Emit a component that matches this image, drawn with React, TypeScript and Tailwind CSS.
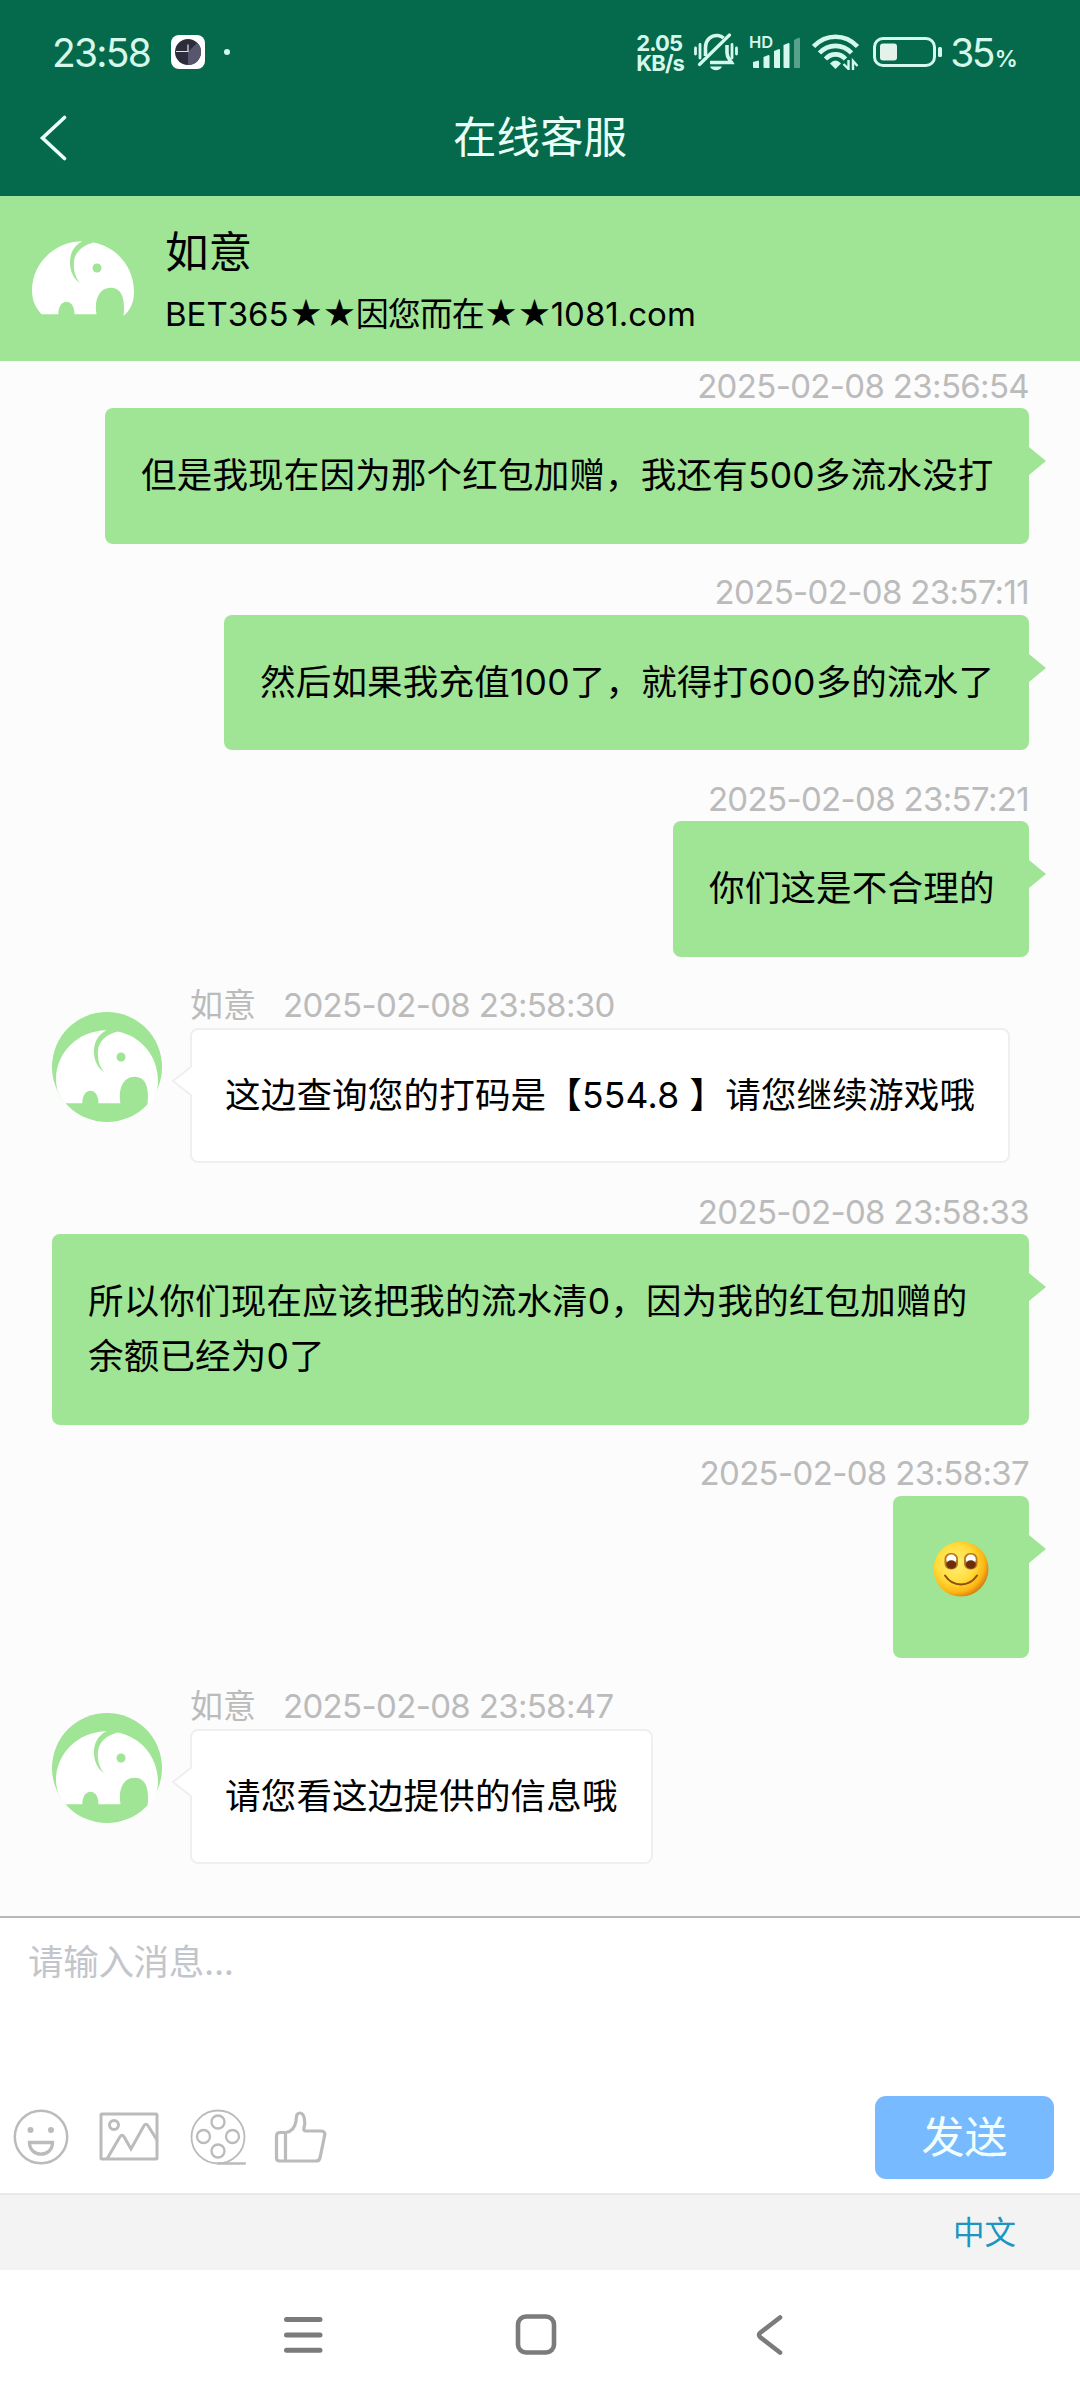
import React, { useState } from "react";

type Message = {
  id: number;
  from: "me" | "agent";
  time: string;
  text?: string;
  width: string;
};

const messages: Message[] = [
  { id: 1, from: "me", time: "2025-02-08 23:56:54", text: "但是我现在因为那个红包加赠，我还有500多流水没打", width: "w-[924px]" },
  { id: 2, from: "me", time: "2025-02-08 23:57:11", text: "然后如果我充值100了，就得打600多的流水了", width: "w-[805px]" },
  { id: 3, from: "me", time: "2025-02-08 23:57:21", text: "你们这是不合理的", width: "w-[356px]" },
  { id: 4, from: "agent", time: "2025-02-08 23:58:30", text: "这边查询您的打码是【554.8 】请您继续游戏哦", width: "w-[820px]" },
  { id: 5, from: "me", time: "2025-02-08 23:58:33", text: "所以你们现在应该把我的流水清0，因为我的红包加赠的\n余额已经为0了", width: "w-[977px]" },
  { id: 6, from: "me", time: "2025-02-08 23:58:37", width: "w-[136px]" },
  { id: 7, from: "agent", time: "2025-02-08 23:58:47", text: "请您看这边提供的信息哦", width: "w-[463px]" },
];

function Avatar() {
  return (
    <svg width="110" height="110" viewBox="0 0 110 110" className="shrink-0">
      <circle cx="55" cy="55" r="55" fill="#a0e496" />
      <path
        d="M13.5 91.3C7 84 4 77 4 67C4 42 25 18.5 54.5 18.3C45 23 41.5 32 42 41C42.4 49 46 56 52 60.3C46.5 53 45.3 46 46 38C47 29 55 22 65.5 19.5C89 24 106 44 106 69C106 79 102.5 87 95.5 93C97 80 96 64.7 82.5 64.7C71 64.7 66 77 68.5 91.3H46.5C46.5 84 43.5 78.7 38.5 78.7C33.5 78.7 30.3 84 30.3 91.3Z"
        fill="#fff"
      />
      <circle cx="69" cy="45" r="4.5" fill="#a0e496" />
    </svg>
  );
}

function SmileEmoji() {
  return (
    <svg width="56" height="56" viewBox="0 0 56 56">
      <defs>
        <radialGradient id="face" cx="0.4" cy="0.4" r="0.62">
          <stop offset="0" stopColor="#fff07a" />
          <stop offset="0.55" stopColor="#ffdd3c" />
          <stop offset="0.85" stopColor="#fdb515" />
          <stop offset="1" stopColor="#d98410" />
        </radialGradient>
      </defs>
      <circle cx="28" cy="28" r="27.5" fill="url(#face)" />
      <rect x="11.5" y="12" width="13.5" height="16.5" rx="6" fill="#b9771c" />
      <rect x="31" y="12" width="13.5" height="16.5" rx="6" fill="#b9771c" />
      <ellipse cx="18.3" cy="18.5" rx="5" ry="5" fill="#fff" />
      <ellipse cx="37.8" cy="18.5" rx="5" ry="5" fill="#fff" />
      <ellipse cx="18.3" cy="23.5" rx="5" ry="4.2" fill="#6b2f0c" />
      <ellipse cx="37.8" cy="23.5" rx="5" ry="4.2" fill="#6b2f0c" />
      <path d="M12 34.5C20 46.500 36 46.500 44 34.500" fill="none" stroke="#8a4f08" strokeWidth="2" strokeLinecap="round" />
    </svg>
  );
}

function StatusBar() {
  return (
    <div className="flex h-[104px] items-center pl-[52px] pr-[65px] text-[#d5f8ec]">
      <span className="w-[98px] whitespace-nowrap text-[39px] leading-none tracking-[-0.045em]">23:58</span>
      <svg width="34" height="34" viewBox="0 0 34 34" className="ml-[21px]">
        <rect width="34" height="34" rx="8" fill="#fff" />
        <circle cx="17" cy="17" r="13" fill="#2c2c3a" />
        <path d="M17 17L26.2 7.8A13 13 0 0 1 17 30Z" fill="#56566e" />
        <path d="M17 9.5V17M5 16.500H17" stroke="#dfe3ea" strokeWidth="1.2" />
      </svg>
      <span className="ml-[19px] h-[6px] w-[6px] rounded-full bg-[#d5f8ec]" />

      <div className="ml-auto flex items-center">
        <div className="w-[58px] whitespace-nowrap pt-[2px] text-[22px] font-bold leading-[20px] tracking-[-0.04em]">
          <div>2.05</div>
          <div>KB/s</div>
        </div>
        {/* Muted bell */}
        <svg width="44" height="38" viewBox="0 0 44 38" fill="none" stroke="currentColor">
          <path d="M1.5 15V21M6 11.5V25M42.5 15V21M38 11.5V25" strokeWidth="2.8" strokeLinecap="round" />
          <path d="M11.5 23V15C11.5 6 18 2 24 2.5C26 2.7 28 3.5 29.5 5M33 12V20C33 25 36 27 37.5 29.5H16" strokeWidth="3.6" />
          <path d="M5.5 31.5L35.5 2" strokeWidth="3.2" strokeLinecap="round" />
          <path d="M16 33.5H28C26 38.5 18 38.5 16 33.5Z" fill="currentColor" stroke="none" />
        </svg>
        <svg width="54" height="46" viewBox="-3 -6 54 46" className="ml-[9px]" fill="currentColor">
          <text x="-1" y="13" fontSize="16.5" fontWeight="600" fontFamily="Inter, sans-serif">HD</text>
          <path d="M3 27L8.5 25.5Q9 25.5 9 27V33H4Q3 33 3 32Z" />
          <path d="M13.5 22L18.5 20Q19.5 20 19.5 21V33H14.5Q13.5 33 13.5 32Z" />
          <path d="M24 16L29 14Q30 14 30 15V33H25Q24 33 24 32Z" />
          <path d="M33.5 10L38.5 8Q39.5 8 39.5 9V33H34.5Q33.5 33 33.5 32Z" />
          <path d="M44 5L49 2.5Q50 2.5 50 4V33H45Q44 33 44 32Z" opacity="0.4" />
        </svg>
        <svg width="48" height="36" viewBox="0 0 48 36" className="ml-[11px]" fill="none" stroke="currentColor">
          <path d="M1.5 12.5C14 -0.5 33 -0.5 45.5 12.5" strokeWidth="4.6" />
          <path d="M7.5 19C16.5 9.5 30.5 9.5 39.5 19" strokeWidth="4.6" />
          <path d="M13.5 25C19 18.8 28 18.8 33.5 25" strokeWidth="4.6" />
          <path d="M23.5 35L18 29.5Q23.5 23.5 29 29.5Z" fill="currentColor" stroke="none" />
          <path d="M36.5 26V35L31.5 30M41 36V27L45.5 32" strokeWidth="2.4" />
        </svg>
        <svg width="70" height="32" viewBox="0 0 70 32" className="ml-[12px]" fill="none" stroke="currentColor">
          <rect x="2.5" y="2.5" width="60" height="27" rx="8.5" strokeWidth="3" />
          <rect x="8" y="7.5" width="17" height="17" rx="3" fill="#e4f3ea" stroke="none" />
          <rect x="66" y="11" width="4" height="10" rx="1.5" fill="currentColor" stroke="none" />
        </svg>
        <span className="ml-[8px] whitespace-nowrap text-[39px] leading-none tracking-[-0.07em]">
          35<span className="ml-[2px] text-[23px] font-semibold">%</span>
        </span>
      </div>
    </div>
  );
}

function MessageRow({ message }: { message: Message }) {
  const { from, time, text, width } = message;

  if (from === "agent") {
    return (
      <div className="flex pl-[52px]">
        <div className="pt-[28px]">
          <Avatar />
        </div>
        <div className="ml-7">
          <div className="flex h-[44px] items-center gap-[27px] pt-px text-[33px] text-[#bbbbbb]">
            <span>如意</span>
            <span className="tracking-[-0.02em]">{time}</span>
          </div>
          <div className={`relative rounded-[8px] border-2 border-[#efefef] bg-white py-[38.25px] pl-[33px] ${width}`}>
            <svg width="22" height="30" viewBox="0 0 22 30" className="absolute -left-[22px] top-[36px]">
              <path d="M22 0L3 15L22 30" fill="#fff" stroke="#efefef" strokeWidth="2" />
            </svg>
            <p className="whitespace-pre text-[35.5px] leading-[55px] tracking-[0.2px]">{text}</p>
          </div>
        </div>
      </div>
    );
  }

  return (
    <div className="flex flex-col items-end pr-[51px]">
      <div className="flex h-[44px] items-center pt-px text-[33px] tracking-[-0.02em] text-[#bbbbbb]">{time}</div>
      <div className={`relative rounded-[8px] bg-[#a0e496] ${width}`}>
        <svg width="17" height="30" viewBox="0 0 17 30" className="absolute -right-[17px] top-[38px]">
          <path d="M0 1L17 15L0 29Z" fill="#a0e496" />
        </svg>
        {text ? (
          <p className="whitespace-pre py-[40.25px] pl-[36px] text-[35.5px] leading-[55px] tracking-[0.2px]">{text}</p>
        ) : (
          <div className="flex h-[162px] justify-center pt-[45px]">
            <SmileEmoji />
          </div>
        )}
      </div>
    </div>
  );
}

function Toolbar() {
  return (
    <div className="flex items-start text-[#bbbbbb]">
      <svg width="56" height="56" viewBox="0 0 56 56" fill="none" stroke="currentColor" strokeWidth="2.5">
        <circle cx="28" cy="28" r="26.2" />
        <circle cx="17.5" cy="21" r="3" fill="currentColor" stroke="none" />
        <circle cx="38" cy="21" r="3" fill="currentColor" stroke="none" />
        <path d="M16.500 33.500H39.500C39.500 49 16.500 49 16.500 33.500Z" strokeWidth="3.4" />
      </svg>
      <svg width="60" height="56" viewBox="0 0 60 56" className="ml-[30px]" fill="none" stroke="currentColor" strokeWidth="3">
        <rect x="2" y="5" width="56" height="45" rx="1" />
        <circle cx="15" cy="16" r="4.5" />
        <path d="M8 50L20.5 28.5Q23 24 25.5 28.5L32 40L44.5 17.5Q47 13 49.5 17.5L58 31" />
      </svg>
      <svg width="58" height="58" viewBox="0 0 58 58" className="ml-[30px]" fill="none" stroke="currentColor" strokeWidth="2.3">
        <circle cx="29" cy="28" r="26.5" strokeWidth="1.8" />
        <circle cx="29" cy="13" r="6.5" />
        <circle cx="29" cy="42" r="6.5" />
        <circle cx="14.5" cy="27.5" r="6.5" />
        <circle cx="43.5" cy="27.5" r="6.5" />
        <path d="M29 54.5H56" strokeLinecap="round" />
      </svg>
      <svg width="56" height="56" viewBox="0 0 56 56" className="ml-[25px]" fill="none" stroke="currentColor" strokeWidth="3.2" strokeLinejoin="round">
        <path d="M14 23.5H8Q4.5 23.5 4.5 27V49Q4.5 52 7.5 52H44C46 52 47.5 51 48 49L52.5 27C53.5 23.5 52 22 49 22H34C32 22 31.5 21 32 19C34 12 32 4 28 4C24 4 24.5 8 24 12C23 18 20 22.500 14 23.500ZM13.500 23.500V52" />
      </svg>
    </div>
  );
}

function App() {
  const [draft, setDraft] = useState("");

  return (
    <div className="flex h-[2400px] w-[1080px] flex-col overflow-hidden bg-white font-['Inter','Noto_Sans_CJK_SC',sans-serif] text-black">
      <header className="h-[196px] bg-[#05694b]">
        <StatusBar />
        <div className="relative flex h-[68px] items-center justify-center">
          <svg width="28" height="48" viewBox="0 0 28 48" className="absolute left-[39px] top-[10px]">
            <path d="M25.5 3.5L3.5 24L25.5 44.500" fill="none" stroke="#eafff8" strokeWidth="3.6" strokeLinecap="round" />
          </svg>
          <h1 className="text-[43.5px] leading-none text-[#eafff8]">在线客服</h1>
        </div>
      </header>

      {/* Agent card */}
      <section className="flex h-[165px] bg-[#a0e496] pl-7">
        <div className="pt-[27px]">
          <Avatar />
        </div>
        <div className="ml-[27px] pt-[26px]">
          <div className="text-[43.5px] leading-[60px]">如意</div>
          <div className="mt-[8px] text-[33px] leading-[48px]">
            BET365<span className="tracking-[-0.03em]">★★因您而在★★</span>1081.com
          </div>
        </div>
      </section>

      {/* Conversation */}
      <main className="flex h-[1555px] flex-col gap-[27px] bg-[#fcfcfc] pt-[3px]">
        {messages.map((message) => (
          <MessageRow key={message.id} message={message} />
        ))}
      </main>

      <footer className="flex flex-col">
        <div className="h-[277px] border-t-2 border-[#b9b9b9] bg-white">
          <textarea
            value={draft}
            onChange={(e) => setDraft(e.target.value)}
            placeholder="请输入消息..."
            className="block h-[178px] w-full resize-none pl-[28px] pt-[17px] text-[35.5px] leading-[55px] tracking-[-0.3px] placeholder-[#c2c5cb] outline-none"
          />
          <div className="flex items-start justify-between pl-[13px] pr-[26px]">
            <div className="pt-[13px]">
              <Toolbar />
            </div>
            <button className="h-[83px] w-[179px] rounded-[11px] bg-[#78baff] text-[43px] leading-none text-[#f2ffff]">
              发送
            </button>
          </div>
        </div>
        <div className="flex h-[77px] items-center justify-end border-t-2 border-[#e9e9e9] bg-[#f3f3f3] pr-[64px]">
          <span className="text-[31.5px] leading-none text-[#1c96c0]">中文</span>
        </div>
        <nav className="flex h-[130px] pl-[280px] pt-[41px] text-[#7b7b7b]">
          <svg width="46" height="48" viewBox="0 0 46 48" stroke="currentColor" strokeWidth="5" strokeLinecap="round">
            <path d="M6.5 8.5H40M6.5 24H40M6.5 39.3H40" />
          </svg>
          <svg width="46" height="48" viewBox="0 0 46 48" className="ml-[187px]" fill="none" stroke="currentColor" strokeWidth="4.6">
            <rect x="5" y="5.5" width="36" height="36" rx="8" />
          </svg>
          <svg width="40" height="48" viewBox="0 0 40 48" className="ml-[192px]" fill="none" stroke="currentColor" strokeWidth="4.6" strokeLinecap="round">
            <path d="M29 6.5L9.5 21.5Q6.5 24 9.5 26.5L29 41.5" />
          </svg>
        </nav>
      </footer>
    </div>
  );
}

export default App;
